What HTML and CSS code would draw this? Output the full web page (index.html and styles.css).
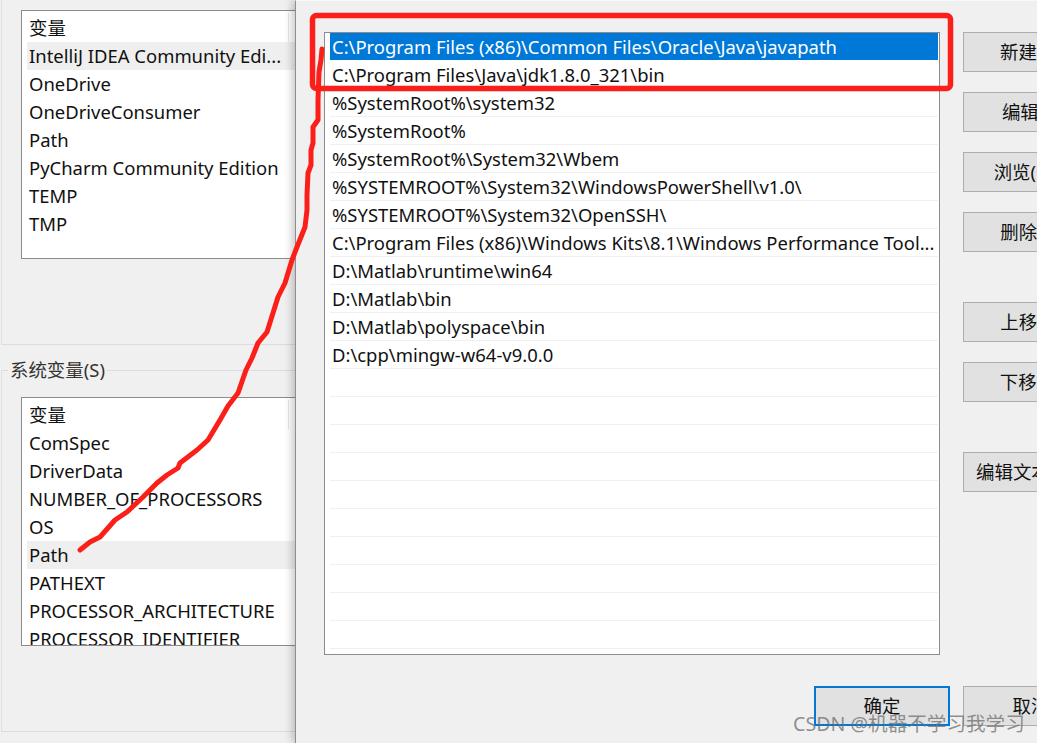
FILE: index.html
```html
<!DOCTYPE html>
<html lang="zh">
<head>
<meta charset="utf-8">
<title>编辑环境变量</title>
<link rel="stylesheet" href="styles.css">
</head>
<body>
<div class="screen">
  <section class="vars">
    <div class="group group-user">
      <div class="table">
        <div class="cell head">变量</div>
        <div class="cell hover">IntelliJ IDEA Community Edi...</div>
        <div class="cell">OneDrive</div>
        <div class="cell">OneDriveConsumer</div>
        <div class="cell">Path</div>
        <div class="cell">PyCharm Community Edition</div>
        <div class="cell">TEMP</div>
        <div class="cell">TMP</div>
      </div>
    </div>
    <div class="group group-system">
      <span class="legend">系统变量(S)</span>
      <div class="table">
        <div class="cell head">变量</div>
        <div class="cell">ComSpec</div>
        <div class="cell">DriverData</div>
        <div class="cell">NUMBER_OF_PROCESSORS</div>
        <div class="cell">OS</div>
        <div class="cell hover">Path</div>
        <div class="cell">PATHEXT</div>
        <div class="cell">PROCESSOR_ARCHITECTURE</div>
        <div class="cell">PROCESSOR_IDENTIFIER</div>
      </div>
    </div>
  </section>
  <section class="dialog">
    <div class="main">
      <div class="pathlist">
        <div class="row selected">C:\Program Files (x86)\Common Files\Oracle\Java\javapath</div>
        <div class="row">C:\Program Files\Java\jdk1.8.0_321\bin</div>
        <div class="row">%SystemRoot%\system32</div>
        <div class="row">%SystemRoot%</div>
        <div class="row">%SystemRoot%\System32\Wbem</div>
        <div class="row">%SYSTEMROOT%\System32\WindowsPowerShell\v1.0\</div>
        <div class="row">%SYSTEMROOT%\System32\OpenSSH\</div>
        <div class="row">C:\Program Files (x86)\Windows Kits\8.1\Windows Performance Tool...</div>
        <div class="row">D:\Matlab\runtime\win64</div>
        <div class="row">D:\Matlab\bin</div>
        <div class="row">D:\Matlab\polyspace\bin</div>
        <div class="row">D:\cpp\mingw-w64-v9.0.0</div>
        <div class="row"></div><div class="row"></div><div class="row"></div><div class="row"></div><div class="row"></div>
        <div class="row"></div><div class="row"></div><div class="row"></div><div class="row"></div><div class="row"></div>
      </div>
      <div class="actions">
        <div class="btn">新建(N)</div>
        <div class="btn">编辑(E)</div>
        <div class="btn">浏览(B)...</div>
        <div class="btn">删除(D)</div>
        <div class="btn gap-a">上移(U)</div>
        <div class="btn">下移(O)</div>
        <div class="btn gap-b">编辑文本(T)...</div>
      </div>
    </div>
    <div class="footer">
      <div class="btn default">确定</div>
      <div class="btn">取消</div>
    </div>
  </section>
  <svg class="marks" width="1037" height="743" viewBox="0 0 1037 743" fill="none" stroke="#fb1f1a" stroke-linecap="round" stroke-linejoin="round">
    <rect x="312.5" y="15.5" width="638" height="73" rx="4" stroke-width="5.5"/>
    <path stroke-width="5" d="M322 49 L321 60 L319 72 L318 100 L318 120 L313 127 L313 143 L311 150 L311 165 L308 173 L307 195 L307 210 L305 227 L297 247 L292 260 L285 283 L278 297 L273 313 L267 332 L258 343 L252 358 L246 370 L238 393 L228 406 L220 420 L208 440 L197 450 L180 463 L178 468 L167 475 L157 483 L143 497 L127 512 L115 520 L100 537 L90 542 L80 550"/>
  </svg>
  <div class="watermark">CSDN @机器不学习我学习</div>
</div>
</body>
</html>
```

FILE: styles.css
```css
* { box-sizing: border-box; }
html, body { margin: 0; padding: 0; background: #f0f0f0; }
.screen {
  position: relative;
  display: flex;
  width: 1037px;
  height: 743px;
  overflow: hidden;
  background: #f0f0f0;
  color: #111;
  font: 18.45px/28px "Noto Sans", "Noto Sans CJK SC", sans-serif;
}
.vars {
  flex: 0 0 295px;
  overflow: hidden;
  padding-left: 1px;
}
.group {
  position: relative;
  width: 340px;
  padding-left: 19px;
  border-left: 1px solid #e0e0e0;
  border-bottom: 1px solid #dcdcdc;
}
.group-user { height: 345px; padding-top: 10px; }
.group-system {
  height: 362px;
  margin-top: 25px;
  padding-top: 26px;
  border-top: 1px solid #dcdcdc;
}
.legend {
  position: absolute;
  left: 6px;
  top: -15px;
  padding: 0 2px;
  background: #f0f0f0;
  color: #333;
}
.table {
  width: 330px;
  height: 249px;
  padding: 3px 0 0 5px;
  overflow: hidden;
  background: #fff;
  border: 1px solid #8c8c8c;
}
.cell { height: 28px; padding-left: 2px; white-space: nowrap; }
.head { position: relative; }
.head::after {
  content: "";
  position: absolute;
  left: 261px;
  top: -1px;
  bottom: 0;
  width: 1px;
  background: #e6e6e6;
}
.hover { background: #efefef; }
.dialog {
  flex: 1 1 auto;
  display: flex;
  flex-direction: column;
  min-width: 0;
  padding: 32px 0 0 28px;
  background: #f0f0f0;
  border-left: 1px solid #8e8e8e;
  border-top: 1px solid #f8f8f8;
  box-shadow: -3px 0 8px rgba(0, 0, 0, .22);
  z-index: 1;
}
.main { display: flex; gap: 23px; margin-top: -1px; }
.pathlist {
  flex: 0 0 616px;
  min-width: 0;
  height: 623px;
  padding: 0 1px 0 5px;
  background: #fff;
  border: 1px solid #8c8c8c;
}
.row {
  height: 28px;
  padding-left: 2px;
  border-bottom: 1px solid #f0f0f0;
  white-space: nowrap;
  overflow: hidden;
}
.selected { height: 27px; margin-bottom: 1px; background: #0078d7; color: #fff; border-bottom: 0; }
.actions { display: flex; flex-direction: column; gap: 20px; }
.btn {
  flex: none;
  width: 136px;
  height: 40px;
  line-height: 38px;
  text-align: center;
  white-space: nowrap;
  background: #e1e1e1;
  border: 1px solid #adadad;
}
.gap-a { margin-top: 30px; }
.gap-b { margin-top: 30px; }
.footer { display: flex; gap: 13px; margin: 31px 0 0 490px; }
.default { border: 2px solid #0078d7; line-height: 36px; }
.marks { position: absolute; left: 0; top: 0; z-index: 2; }
.watermark {
  position: absolute;
  left: 793px;
  top: 711px;
  z-index: 3;
  color: rgba(110, 110, 110, .75);
  font: 19.6px/26px "Noto Sans", "Noto Sans CJK SC", sans-serif;
}
```
